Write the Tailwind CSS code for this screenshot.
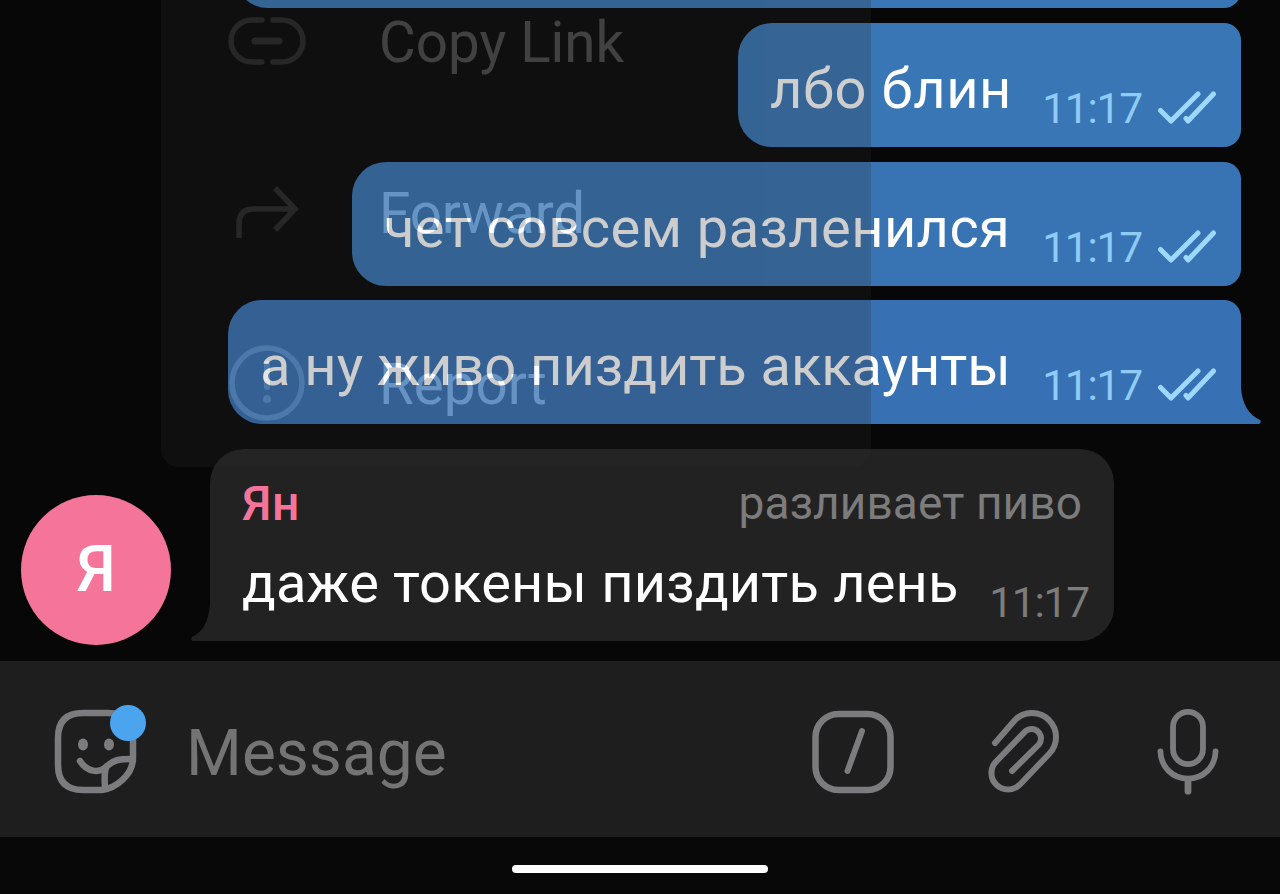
<!DOCTYPE html>
<html lang="en">
<head>
    <meta charset="UTF-8">
    <meta name="viewport" content="width=device-width, initial-scale=1.0">
    <title>Chat</title>
    <script src="https://cdn.jsdelivr.net/npm/@tailwindcss/browser@4"></script>
</head>
<body class="bg-black overflow-hidden font-['Roboto',sans-serif]">

<svg class="hidden">
    <symbol id="ticks" viewBox="0 0 60 34">
        <path d="M2.500 19.500 L13 30 L40 3 M28 27.500 L30 30 L55.500 3" fill="none" stroke="currentColor" stroke-width="5" stroke-linecap="round" stroke-linejoin="round"/>
    </symbol>
</svg>

<div class="w-[1280px] h-[894px] flex flex-col overflow-hidden">

    <!-- Chat -->
    <main class="relative h-[661px] shrink-0 overflow-hidden bg-[#070707]">
        <div class="-mt-[116px] pr-[39px] flex flex-col items-end gap-[15px]">
            <div class="w-[1007px] h-[124px] bg-[#3876b5] rounded-l-[34px] rounded-r-[17px]"></div>

            <div class="w-[503px] h-[124px] pl-8 pr-[23px] flex items-start bg-[#3876b5] rounded-l-[34px] rounded-r-[17px]">
                <p class="mt-[38px] text-[56px] leading-none tracking-[0.6px] text-white whitespace-nowrap">лбо блин</p>
                <span class="ml-auto mt-[65px] text-[42.5px] leading-none tracking-[-1.2px] text-[#8fcbf5]">11:17</span>
                <svg class="ml-[16px] mt-[68px] w-[60px] h-[34px] text-[#9fd8ff]"><use href="#ticks"/></svg>
            </div>

            <div class="w-[889px] h-[124px] pl-8 pr-[23px] flex items-start bg-[#3874b4] rounded-l-[34px] rounded-r-[17px]">
                <p class="mt-[38px] text-[56px] leading-none tracking-[0.4px] text-white whitespace-nowrap">чет совсем разленился</p>
                <span class="ml-auto mt-[65px] text-[42.5px] leading-none tracking-[-1.2px] text-[#8fcbf5]">11:17</span>
                <svg class="ml-[16px] mt-[68px] w-[60px] h-[34px] text-[#9fd8ff]"><use href="#ticks"/></svg>
            </div>

            <div class="relative -mt-px w-[1013px] h-[124px] pl-8 pr-[23px] flex items-start bg-[#3871b3] rounded-l-[34px] rounded-tr-[17px]">
                <p class="mt-[38px] text-[56px] leading-none text-white whitespace-nowrap">а ну живо пиздить аккаунты</p>
                <span class="ml-auto mt-[65px] text-[42.5px] leading-none tracking-[-1.2px] text-[#8fcbf5]">11:17</span>
                <svg class="ml-[16px] mt-[68px] w-[60px] h-[34px] text-[#9fd8ff]"><use href="#ticks"/></svg>
                <svg class="absolute left-full bottom-0 -ml-px w-[22px] h-[44px]" viewBox="0 0 22 44"><path d="M0 0 H1 V8 C2 24 9 35 20 40 Q22 42 19 44 H0 Z" fill="#3871b3"/></svg>
            </div>
        </div>

        <div class="mt-[25px] pl-[21px] flex items-end">
            <div class="size-[150px] -mb-1 rounded-full bg-[#f4749a] flex items-center justify-center text-[64px] font-medium leading-none text-white">Я</div>
            <div class="relative ml-[39px] w-[904px] h-[192px] pl-8 pr-[25px] bg-[#222222] rounded-r-[34px] rounded-tl-[34px]">
                <svg class="absolute right-full bottom-0 -mr-px w-[21px] h-[44px]" viewBox="0 0 21 44"><path d="M21 0 H20 V6 C19 24 13 35 2 40 Q0 43 3 44 H21 Z" fill="#222222"/></svg>
                <div class="pt-[31px] pr-[7px] flex items-start justify-between text-[48px] leading-none">
                    <span class="font-medium tracking-[0.5px] text-[#f4749a]">Ян</span>
                    <span class="text-[46px] tracking-[0.1px] text-[#7c7c7c]">разливает пиво</span>
                </div>
                <div class="mt-[27px] flex items-start justify-between whitespace-nowrap">
                    <p class="text-[56px] leading-none tracking-[0.18px] text-white">даже токены пиздить лень</p>
                    <span class="mt-[27px] text-[42.5px] leading-none tracking-[-1.2px] text-[#7c7c7c]">11:17</span>
                </div>
            </div>
        </div>

        <!-- Fading context menu -->
        <div class="absolute left-[161px] -top-[41px] w-[710px] h-[508px] rounded-b-[18px] bg-[#2b2b2b] opacity-[0.23] text-white text-[56.5px] leading-none">
            <div class="h-[171px] pl-[67px] flex items-center gap-[73px]">
                <svg class="-mt-[7px] w-[78px] h-[50px]" viewBox="0 0 78 50" fill="none" stroke="#909090" stroke-width="5.5" stroke-linecap="round"><path d="M34 4 H24 A21 21 0 0 0 24 46 H34 M45 4 H54 A21 21 0 0 1 54 46 H45"/><path d="M27 25 H51" stroke-width="7"/></svg>
                <span class="pb-0.5">Copy Link</span>
            </div>
            <div class="h-[171px] pl-[67px] flex items-center gap-[73px]">
                <svg class="-mt-[7px] w-[78px] h-[60px]" viewBox="0 0 78 60" fill="none" stroke="#909090" stroke-width="5.5"><path d="M11 56 V42 Q11 27 26 27 H67 M47 6 L67 27 L47 48"/></svg>
                <span class="pb-0.5">Forward</span>
            </div>
            <div class="h-[171px] pl-[67px] flex items-center gap-[73px]">
                <svg class="-mt-[7px] w-[78px] h-[78px]" viewBox="0 0 78 78" fill="none" stroke="#909090" stroke-width="5.5"><circle cx="39" cy="39" r="35"/><path d="M39 20 V43" stroke-width="6" stroke-linecap="round"/><circle cx="39" cy="55" r="4" fill="#909090" stroke="none"/></svg>
                <span class="pb-0.5">Report</span>
            </div>
        </div>
    </main>

    <!-- Message input -->
    <div class="h-[176px] shrink-0 bg-[#1e1e1e] flex items-center pl-[50px] pr-[60px] text-[#7c7c7e]">
        <div class="relative mt-[4px] w-[92px] h-[92px]">
            <svg class="w-[92px] h-[92px]" viewBox="0 0 92 92" fill="none" stroke="currentColor" stroke-width="6.5" stroke-linecap="round"><path d="M83 46 V33 Q83 8 58 8 H33 Q8 8 8 33 V60 Q8 85 33 85 H52 C66 83 83 70 83 53 Z" stroke-linejoin="round"/><path d="M30 56 C37 67 49 69 57 61 C64 55 68 54 82 54 M56 63 Q54 68 55 83"/><ellipse cx="33" cy="39.500" rx="5" ry="6" fill="currentColor" stroke="none"/><ellipse cx="59" cy="39.500" rx="5" ry="6" fill="currentColor" stroke="none"/></svg>
            <span class="absolute left-[60px] top-0 size-[36px] rounded-full bg-[#4ba4ee]"></span>
        </div>
        <span class="ml-[44px] mt-[9px] text-[64px] leading-none text-[#747474]">Message</span>
        <svg class="ml-auto mt-[6px] w-[84px] h-[84px]" viewBox="0 0 84 84" fill="none" stroke="currentColor" stroke-width="6.5" stroke-linecap="round"><rect x="4.5" y="4" width="75" height="76" rx="23"/><path d="M51 21 L36.500 61" stroke-width="6"/></svg>
        <svg class="ml-[93px] mt-[6px] w-[74px] h-[84px]" viewBox="0 0 74 84" fill="none" stroke="currentColor" stroke-width="6" stroke-linecap="round" stroke-linejoin="round"><path d="M7 33 L27 10 A24 24 0 0 1 61 44 L31.700 74.700 A16.500 16.500 0 0 1 8.300 51.300 L37.300 21.300 A9.500 9.500 0 0 1 50.700 34.700 L24 61"/></svg>
        <svg class="ml-[94px] mt-[4px] w-[64px] h-[87px]" viewBox="0 0 66 90" fill="none" stroke="currentColor" stroke-width="6" stroke-linecap="round"><rect x="17.5" y="4" width="31" height="54" rx="15.5"/><path d="M4.500 45 C5 61 17 73 33 73 C49 73 61 61 61.500 45"/><path d="M33 74 V86" stroke-width="7"/></svg>
    </div>

    <!-- Navigation bar -->
    <div class="grow bg-[#080808] flex justify-center pt-[28px]">
        <div class="w-[256px] h-[8px] rounded-full bg-white"></div>
    </div>
</div>

</body>
</html>
